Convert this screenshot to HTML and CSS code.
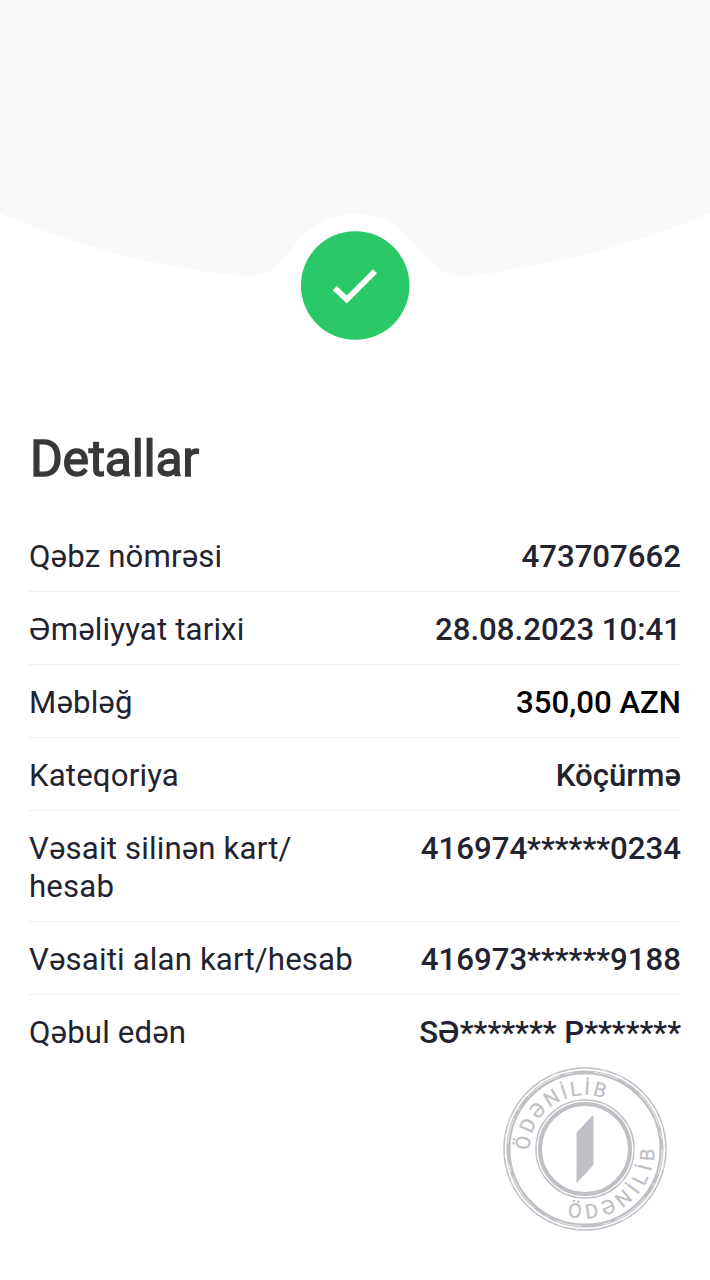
FILE: index.html
```
<!DOCTYPE html>
<html lang="az">
<head>
    <meta charset="UTF-8">
    <title>Detallar</title>
    <link rel="stylesheet" href="styles.css">
</head>
<body>
<div class="receipt">
    <div class="header">
        <svg width="710" height="350" viewBox="0 0 710 350">
            <path class="header-bg" d="M0 0H710V213C628 248 545 266 466 276.500C448 278 434 267 424 255C411 241 396 214 355 214C314 214 299 241 287 255C277 267 266 277 246 276C165 269 82 249 0 213Z"/>
            <circle class="header-circle" cx="355.200" cy="285.500" r="54.300"/>
            <path class="header-check" d="M334.800 288.200L346.800 299.500L375 271.300"/>
        </svg>
    </div>
    <h1 class="title">Detallar</h1>
    <ul class="details">
        <li>
            <span class="name">Qəbz nömrəsi</span>
            <span class="value">473707662</span>
        </li>
        <li>
            <span class="name">Əməliyyat tarixi</span>
            <span class="value">28.08.2023 10:41</span>
        </li>
        <li>
            <span class="name">Məbləğ</span>
            <span class="value amount">350,00 AZN</span>
        </li>
        <li>
            <span class="name">Kateqoriya</span>
            <span class="value">Köçürmə</span>
        </li>
        <li>
            <span class="name">Vəsait silinən kart/<br>hesab</span>
            <span class="value">416974******0234</span>
        </li>
        <li>
            <span class="name">Vəsaiti alan kart/hesab</span>
            <span class="value">416973******9188</span>
        </li>
        <li>
            <span class="name">Qəbul edən</span>
            <span class="value">SƏ******* P*******</span>
        </li>
    </ul>
    <div class="stamp">
        <svg width="166" height="166" viewBox="-83 -83 166 166">
            <defs>
                <path id="arcTop" d="M-55.500 1.500A55.500 55.500 0 0 1 55.500 1.500"/>
                <path id="arcBottom" d="M-69.500 0A69.500 69.500 0 0 0 69.500 0A69.500 69.500 0 0 0 0 -69.500"/>
            </defs>
            <circle class="ring" r="81" stroke-width="1.600"/>
            <circle class="ring" r="76.500" stroke-width="4"/>
            <circle class="ring" r="49" stroke-width="1.500"/>
            <circle class="ring" r="45" stroke-width="4"/>
            <!-- worn ink -->
            <circle class="wear" r="77.300" stroke-dasharray="26 9 3 14 38 5 8 21"/>
            <circle class="wear" r="80.300" stroke-dasharray="3 11 7 25 2 18"/>
            <circle class="wear" r="48.300" stroke-dasharray="4 17 2 9 6 23"/>
            <path class="stamp-logo" d="M-8.500 -15.500Q-8.500 -16.500 -7.500 -17.500L7 -33Q8.500 -34 8.500 -32.500V14.500Q8.500 16 7.500 17L-7 32.500Q-8.500 34 -8.500 32Z"/>
            <text class="stamp-text"><textPath href="#arcTop" startOffset="0">ÖDƏNİLİB</textPath></text>
            <text class="stamp-text bottom"><textPath href="#arcBottom" startOffset="91">ÖDƏNİLİB</textPath></text>
        </svg>
    </div>
</div>
</body>
</html>
```
FILE: styles.css
```
body{
    margin: 0;
    background: #fff;
    font-family: Roboto, sans-serif;
}
.receipt{
    width: 710px;
    height: 1280px;
    overflow: hidden;
}
.header{
    height: 350px;
}
.header svg{
    display: block;
}
.header-bg{
    fill: #f9f9f9;
}
.header-circle{
    fill: #2bc868;
}
.header-check{
    fill: none;
    stroke: #fff;
    stroke-width: 5.8;
}
.title{
    margin: 79px 30px 0;
    font-size: 50px;
    line-height: 60px;
    font-weight: 400;
    letter-spacing: -0.3px;
    color: #373938;
    -webkit-text-stroke: 1.4px #373938;
}
.details{
    list-style: none;
    margin: 29.9px 29px 0;
    padding: 0;
}
.details li{
    display: flex;
    justify-content: space-between;
    padding: 19px 0 15.6px;
    border-bottom: 1px solid #efefef;
    font-size: 31.2px;
    line-height: 37.5px;
    color: #23232f;
}
.details li:last-child{
    border-bottom: none;
}
.name{
    letter-spacing: 0.15px;
}
.value{
    font-weight: 500;
}
.amount{
    color: #000;
}
.stamp{
    display: flex;
    justify-content: flex-end;
    margin-top: -1px;
    padding-right: 42.5px;
}
.ring{
    fill: none;
    stroke: #bfc0c5;
}
.wear{
    fill: none;
    stroke: #fff;
    stroke-width: 0.7;
}
.stamp-logo{
    fill: #bfc0c5;
}
.stamp-text{
    fill: #bfc0c5;
    stroke: #bfc0c5;
    stroke-width: 0.3;
    font-size: 20px;
    letter-spacing: 2.5px;
}
.bottom{
    letter-spacing: 5.4px;
}
```
